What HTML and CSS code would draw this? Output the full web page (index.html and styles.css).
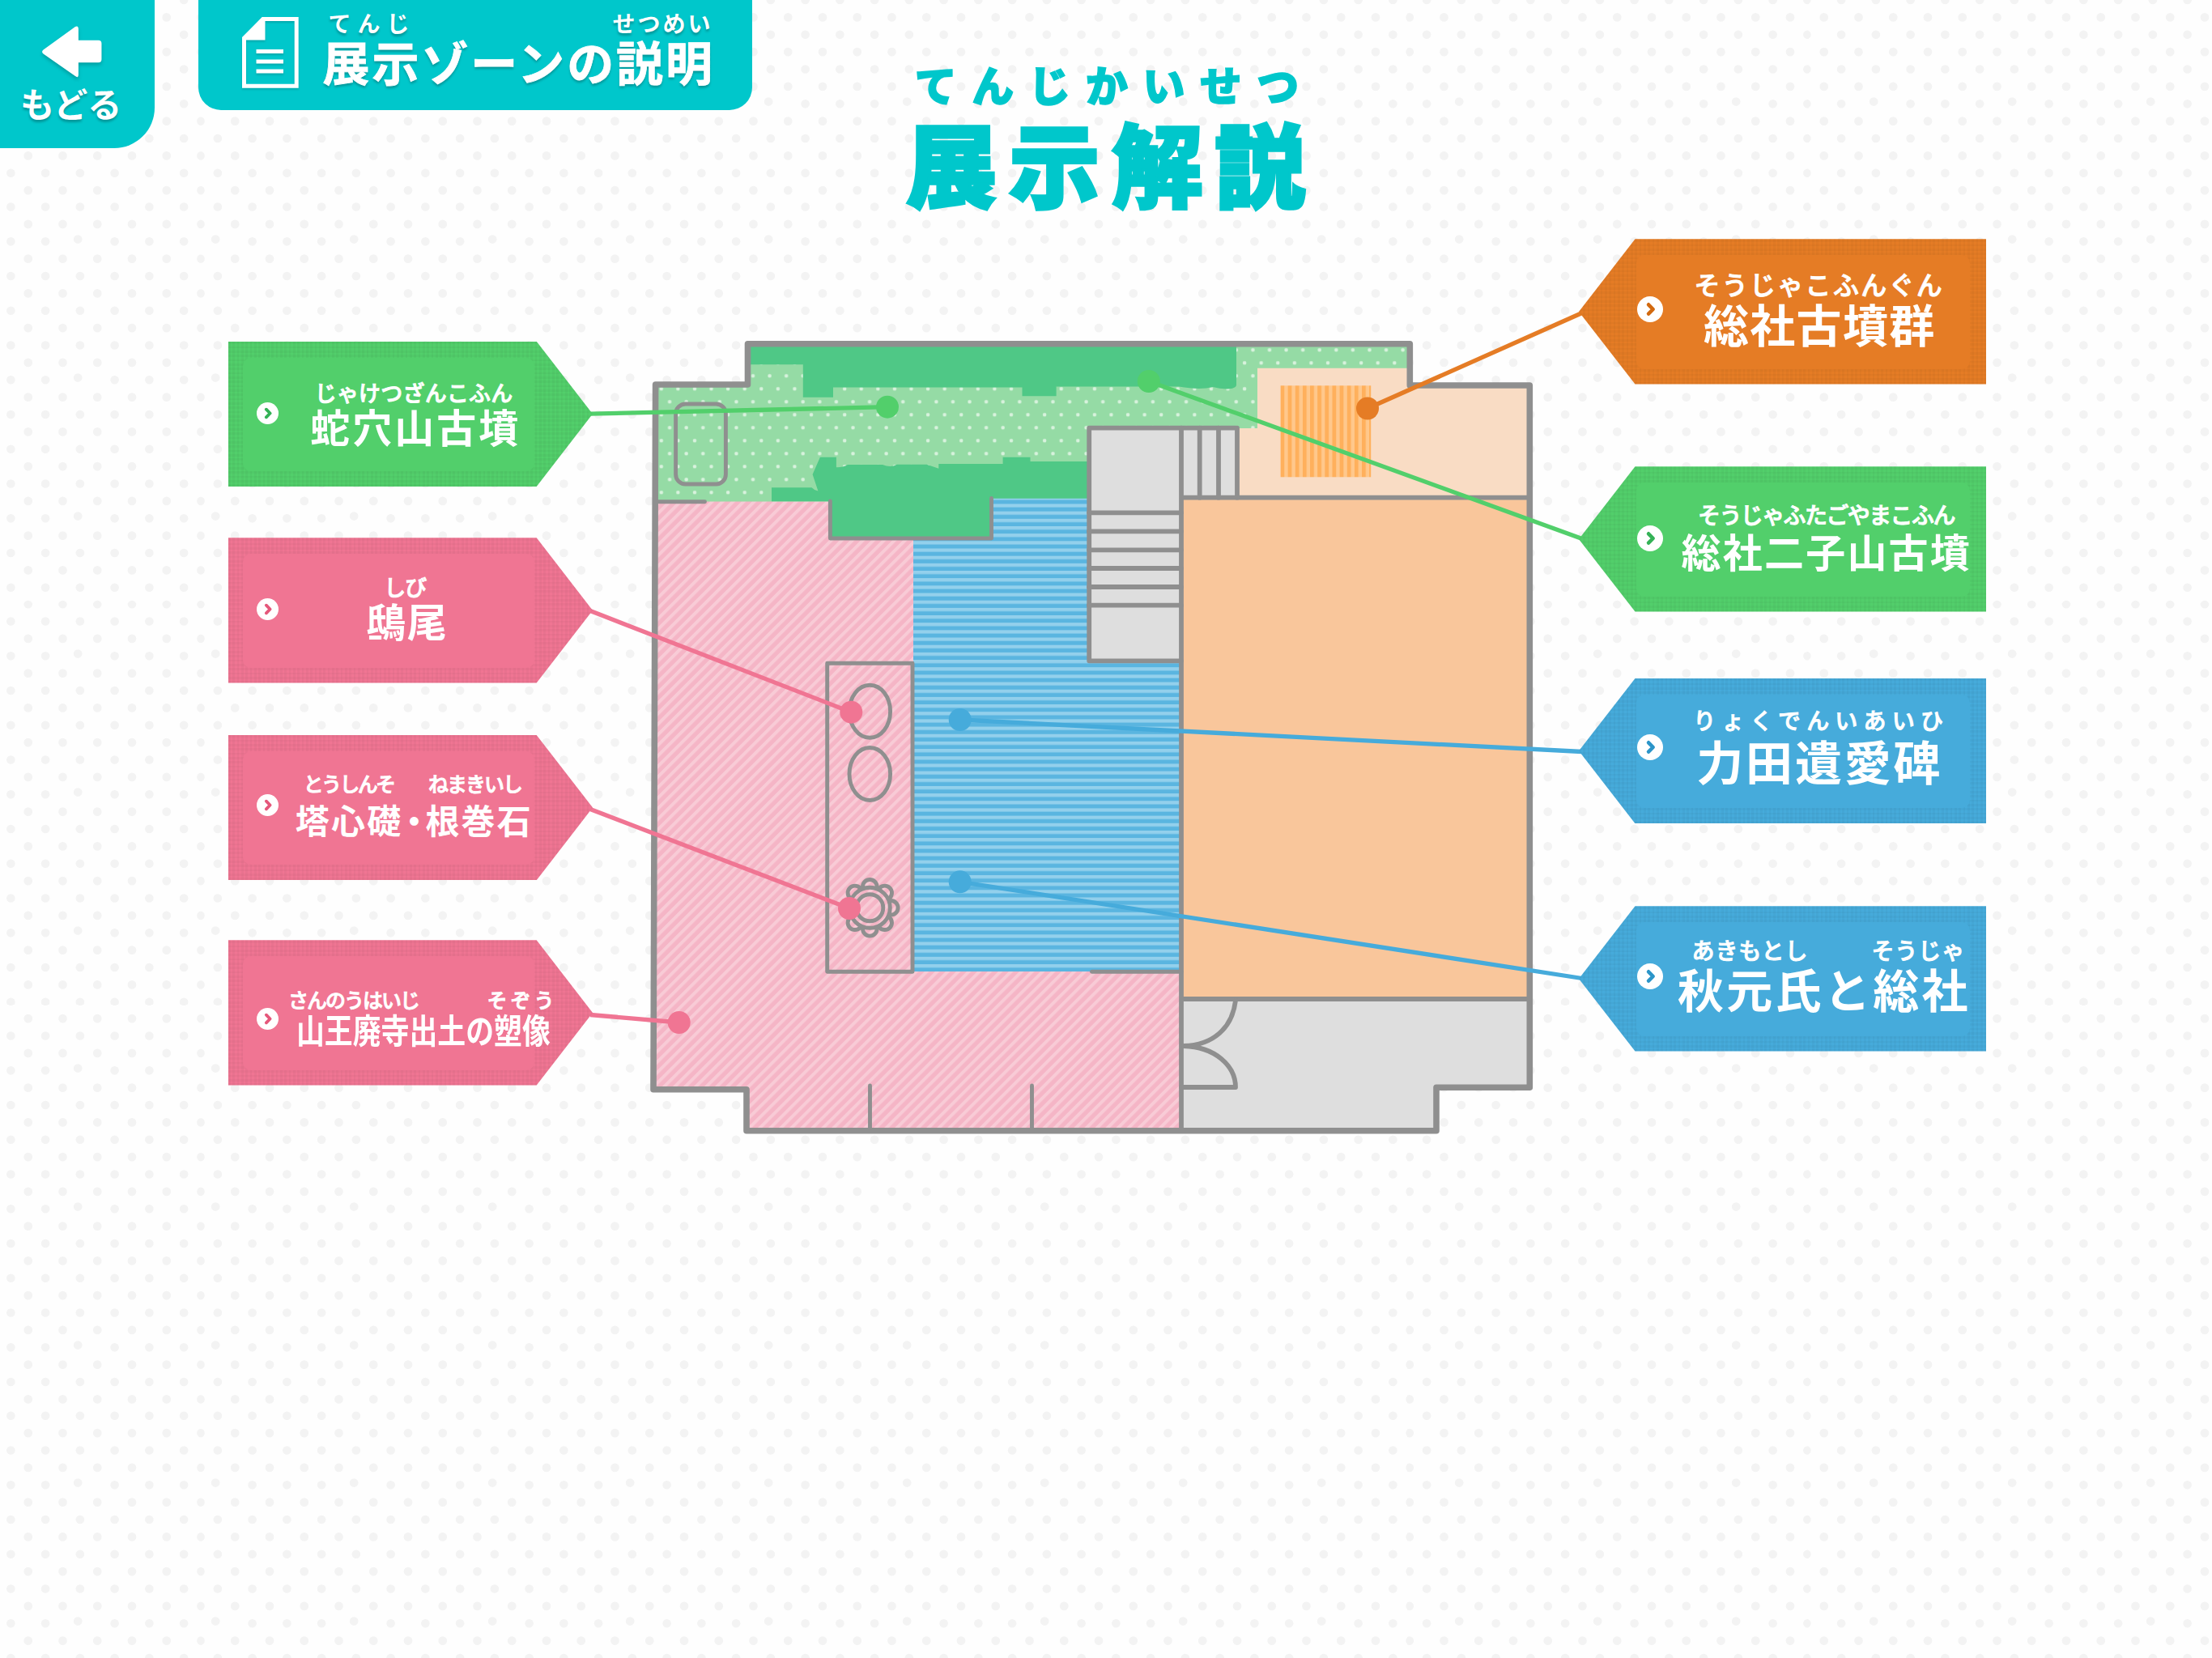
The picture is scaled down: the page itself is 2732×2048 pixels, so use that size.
FILE: index.html
```html
<!DOCTYPE html>
<html lang="ja">
<head>
    <meta charset="UTF-8">
    <meta name="viewport" content="width=device-width, initial-scale=1.0">
    <title>展示解説</title>
    <link rel="stylesheet" href="styles.css">
</head>
<body>
    <header class="header">
        <a class="back" href="#">
            <svg class="back-arrow" viewBox="0 0 76 68">
                <path d="M2 31 L42 2 Q46 0 46 5 V19 H71 Q75 19 75 23 V43 Q75 47 71 47 H46 V62 Q46 67 42 64 L2 36 Q-1 33.500 2 31 Z" fill="#fff"/>
            </svg>
            <span class="back-text">もどる</span>
        </a>
        <div class="panel">
            <svg class="panel-icon" viewBox="0 0 70 88">
                <path d="M26 2.500 H67.200 V85.200 H2.500 V27 Z" fill="none" stroke="#fff" stroke-width="5"/>
                <path d="M25 0 H28.500 V28.500 H0 V25 Z" fill="#fff"/>
                <path d="M17.500 42.500 H51 M17.500 55 H51 M17.500 67 H51" stroke="#fff" stroke-width="5"/>
            </svg>
            <div class="panel-label">
                <div class="panel-yomi"><span class="y1">てんじ</span><span class="y2">せつめい</span></div>
                <div class="panel-name">展示ゾーンの説明</div>
            </div>
        </div>
        <h1 class="title">
            <span class="title-yomi">てんじかいせつ</span>
            <span class="title-name">展示解説</span>
        </h1>
    </header>

    <svg class="symbols">
        <symbol id="chevron" viewBox="0 0 28 28">
            <circle cx="14" cy="14" r="14" fill="#fff"/>
            <path d="M12.300 9 L17.200 14 L12.300 19" fill="none" stroke="currentColor" stroke-width="4" stroke-linecap="round" stroke-linejoin="round"/>
        </symbol>
    </svg>

    <main class="guide">
        <nav class="tags tags-left">
            <a class="tag green jaketsuzan" href="#">
                <svg class="icon"><use href="#chevron"/></svg>
                <span class="label">
                    <span class="yomi">じゃけつざんこふん</span>
                    <span class="name">蛇穴山古墳</span>
                </span>
            </a>
            <a class="tag pink shibi" href="#">
                <svg class="icon"><use href="#chevron"/></svg>
                <span class="label">
                    <span class="yomi">しび</span>
                    <span class="name">鴟尾</span>
                </span>
            </a>
            <a class="tag pink toushinso" href="#">
                <svg class="icon"><use href="#chevron"/></svg>
                <span class="label">
                    <span class="yomi">とうしんそ<span class="next">ねまきいし</span></span>
                    <span class="name">塔心礎<span class="dot">・</span>根巻石</span>
                </span>
            </a>
            <a class="tag pink sannou" href="#">
                <svg class="icon"><use href="#chevron"/></svg>
                <span class="label">
                    <span class="yomi">さんのうはいじ<span class="next">そぞう</span></span>
                    <span class="name">山王廃寺出土の塑像</span>
                </span>
            </a>
        </nav>

        <svg class="map" viewBox="731 290 1219 1120">
            <defs>
                <pattern id="dots" x="816.800" y="480.300" width="20.580" height="32" patternUnits="userSpaceOnUse" patternTransform="translate(-5 -8)">
                    <rect width="21" height="32" fill="#95dba5"/>
                    <circle cx="5" cy="8" r="2.300" fill="#d8f2dd"/>
                    <circle cx="15.290" cy="24" r="2.300" fill="#d8f2dd"/>
                </pattern>
                <pattern id="pink" width="9.200" height="9.200" patternUnits="userSpaceOnUse" patternTransform="rotate(45)">
                    <rect width="9.200" height="9.200" fill="#f5b5c6"/>
                    <rect width="4" height="9.200" fill="#f8cbd6"/>
                </pattern>
                <pattern id="blue" y="1191" width="20" height="9.170" patternUnits="userSpaceOnUse">
                    <rect width="20" height="9.170" fill="#5ab5e0"/>
                    <rect width="20" height="4.200" fill="#93d0ec"/>
                </pattern>
                <pattern id="orange" x="1581.500" width="9.140" height="20" patternUnits="userSpaceOnUse">
                    <rect width="9.140" height="20" fill="#ffc88c"/>
                    <rect width="4.800" height="20" fill="#ffb05c"/>
                </pattern>
            </defs>

            <!-- floor areas -->
            <path d="M809 619 H1459 V1397 H922 V1346 H807 Z" fill="url(#pink)"/>
            <path d="M1128 615 H1459 V1200 H1128 Z" fill="url(#blue)"/>
            <path d="M809 475 H923.500 V425 H1741 V530 H1459 V615 H1225 V619.500 H809 Z" fill="url(#dots)"/>
            <path d="M1553 454.700 H1741 V476 H1889 V615 H1459 V529 H1553 Z" fill="#f9dcc4"/>
            <rect x="1581.500" y="476.300" width="111.700" height="113" fill="url(#orange)"/>
            <rect x="1459" y="615" width="430" height="620" fill="#f9c69b"/>
            <path d="M1459 1234 H1889 V1343.300 H1774 V1396.700 H1459 Z" fill="#dedede"/>

            <!-- mounds -->
            <path d="M927 425 H1527 V476 Q1526 480 1515 480.500 Q1506 480 1498 478 Q1482 482 1456 477.500 H1304.600 V489.300 H1262.500 V478.500 H1029 V490.700 H991.800 V450.300 H927 Z" fill="#4fc886"/>
            <path d="M953 602.300 H1002.500 Q1006 606 1010.400 606.500 L1003.600 586 L1012.900 564.700 H1032.900 V577.300 Q1041 577.500 1047 574 H1090 Q1100 578 1108 573.700 H1144.600 L1159.300 578.700 V573 H1238.600 V564.700 H1272.500 V570 H1345 V615.700 H1225 V665 H1025 V619.300 H953 Z" fill="#4fc886"/>

            <!-- stairs -->
            <path d="M1345.200 528.700 H1528 V615 H1459 V816.300 H1345.200 Z" fill="#dedede"/>
            <g class="wall wall-mid">
                <path d="M1459 816.300 H1345.200 V528.700 H1528 V614.700"/>
                <path d="M1481.700 528.700 V614.700 M1505 528.700 V614.700"/>
                <path d="M1345 633.300 H1459 M1345 656.300 H1459 M1345 679.300 H1459 M1345 702 H1459 M1345 725 H1459 M1345 747.700 H1459"/>
                <path d="M1459 614.700 H1889 M1459 1234 H1889 M1459 528.700 V1396"/>
                <path d="M1526 1236 C1522 1270 1498 1291 1462 1292 C1500 1293 1526 1316 1526 1343 H1459"/>
            </g>

            <!-- inner walls and exhibits -->
            <g class="wall wall-thin">
                <path d="M809 619.700 H870.500"/>
                <path d="M1025.400 619 V665 H1224.500 V615.500"/>
                <path d="M1348.500 1200.300 H1459"/>
                <path d="M1074.500 1341 V1396 M1274.500 1341 V1396"/>
                <rect x="834.600" y="499" width="61.800" height="99" rx="12"/>
                <rect x="1021.700" y="819.300" width="105.300" height="381"/>
                <ellipse cx="1074.300" cy="878.700" rx="25.300" ry="32.500"/>
                <ellipse cx="1074.300" cy="956" rx="25.300" ry="32.500"/>
                <circle cx="1074.300" cy="1095.300" r="8.800"/>
                <circle cx="1092.700" cy="1102.900" r="8.800"/>
                <circle cx="1100.300" cy="1121.300" r="8.800"/>
                <circle cx="1092.700" cy="1139.700" r="8.800"/>
                <circle cx="1074.300" cy="1147.300" r="8.800"/>
                <circle cx="1055.900" cy="1139.700" r="8.800"/>
                <circle cx="1048.300" cy="1121.300" r="8.800"/>
                <circle cx="1055.900" cy="1102.900" r="8.800"/>
                <circle cx="1074.300" cy="1121.300" r="25" fill="url(#pink)"/>
                <circle cx="1074.300" cy="1121.300" r="16.500"/>
            </g>

            <!-- outer wall -->
            <path class="wall wall-outer" d="M809.600 475 H923.500 V424.700 H1741.300 V476 H1889.300 V1343.300 H1774 V1396.700 H922 V1345.700 H807 Z"/>

            <!-- leader lines -->
            <g class="lead lead-green">
                <path d="M729 511.200 L1096 502.700"/><circle cx="1096" cy="502.700" r="14"/>
                <path d="M1954 665.500 L1418.800 471"/><circle cx="1418.800" cy="471" r="14"/>
            </g>
            <g class="lead lead-pink">
                <path d="M729 754.500 L1051.300 879.700"/><circle cx="1051.300" cy="879.700" r="14"/>
                <path d="M729 999.500 L1049 1122"/><circle cx="1049" cy="1122" r="14"/>
                <path d="M729 1253.500 L838.700 1263"/><circle cx="838.700" cy="1263" r="14"/>
            </g>
            <g class="lead lead-orange">
                <path d="M1954 386.500 L1689 504.500"/><circle cx="1689" cy="504.500" r="14"/>
            </g>
            <g class="lead lead-blue">
                <path d="M1954 928.500 L1185.700 889"/><circle cx="1185.700" cy="889" r="14"/>
                <path d="M1954 1208.500 L1185.700 1089.300"/><circle cx="1185.700" cy="1089.300" r="14"/>
            </g>
        </svg>

        <nav class="tags tags-right">
            <a class="tag orange kofungun" href="#">
                <svg class="icon"><use href="#chevron"/></svg>
                <span class="label">
                    <span class="yomi">そうじゃこふんぐん</span>
                    <span class="name">総社古墳群</span>
                </span>
            </a>
            <a class="tag green futagoyama" href="#">
                <svg class="icon"><use href="#chevron"/></svg>
                <span class="label">
                    <span class="yomi">そうじゃふたごやまこふん</span>
                    <span class="name">総社二子山古墳</span>
                </span>
            </a>
            <a class="tag blue ryokuden" href="#">
                <svg class="icon"><use href="#chevron"/></svg>
                <span class="label">
                    <span class="yomi">りょくでんいあいひ</span>
                    <span class="name">力田遺愛碑</span>
                </span>
            </a>
            <a class="tag blue akimoto" href="#">
                <svg class="icon"><use href="#chevron"/></svg>
                <span class="label">
                    <span class="yomi">あきもとし<span class="next">そうじゃ</span></span>
                    <span class="name">秋元氏と総社</span>
                </span>
            </a>
        </nav>
    </main>
</body>
</html>
```

FILE: styles.css
```css
* {
    box-sizing: border-box;
}

body {
    margin: 0;
    min-height: 2048px;
    font-family: "Noto Sans CJK JP", sans-serif;
    font-weight: 700;
    background-color: #fefefe;
    background-image: url("data:image/svg+xml,%3Csvg xmlns='http://www.w3.org/2000/svg' viewBox='0 0 64 64' width='64' height='64'%3E%3Cg fill='none' stroke='%23f3f3f3' stroke-width='4' stroke-linecap='round'%3E%3Cpath d='M5 0h0M21 0h0M37 0h0M53 0h0M13 8h0M29 8h0M45 8h0M61 8h0M5 16h0M21 16h0M37 16h0M53 16h0M13 24h0M29 24h0M45 24h0M61 24h0M5 32h0M21 32h0M37 32h0M53 32h0M13 40h0M29 40h0M45 40h0M61 40h0M5 48h0M21 48h0M36 47h0M53 48h0M13 56h0M29 56h0M45 56h0M61 56h0M5 64h0M21 64h0M37 64h0M53 64h0'/%3E%3C/g%3E%3C/svg%3E");
    background-size: 170.667px 170.667px;
}

a {
    color: inherit;
    text-decoration: none;
}

.symbols {
    display: none;
}

/* header */
.header {
    display: flex;
    align-items: flex-start;
    height: 290px;
    line-height: 1;
    white-space: nowrap;
}

.back {
    width: 190.600px;
    height: 182.500px;
    padding: 31px 0 0 25px;
    color: #fff;
    background: #00c7cb;
    border-radius: 0 0 50px 0;
}

.back-arrow {
    display: block;
    width: 76px;
    height: 67px;
    margin-left: 26px;
    filter: drop-shadow(0 3px 2px rgba(0, 0, 0, .2));
}

.back-text {
    display: block;
    margin-top: 8px;
    font-size: 42px;
    text-shadow: 0 3px 3px rgba(0, 0, 0, .25);
}

.panel {
    display: flex;
    width: 683.700px;
    height: 136px;
    margin-left: 54.500px;
    padding-left: 53.500px;
    color: #fff;
    background: #00c7cb;
    border-radius: 0 0 28px 28px;
}

.panel-icon {
    width: 70px;
    height: 88px;
    margin-top: 21px;
    filter: drop-shadow(0 2px 1px rgba(0, 0, 0, .15));
}

.panel-label {
    margin-left: 30px;
    text-shadow: 0 3px 3px rgba(0, 0, 0, .25);
}

.panel-yomi {
    margin-top: 13.500px;
    padding-left: 7px;
    font-size: 28px;
}

.panel-yomi .y1 {
    letter-spacing: 8px;
}

.panel-yomi .y2 {
    margin-left: 243px;
    letter-spacing: 3px;
}

.panel-name {
    margin-top: 4px;
    font-size: 58px;
    letter-spacing: 2.900px;
    -webkit-text-stroke: .8px #fff;
}

.title {
    margin: 78px 0 0 189px;
    color: #00c7cb;
    font-weight: 900;
}

.title span {
    display: block;
}

.title-yomi {
    padding-left: 12px;
    font-size: 52px;
    letter-spacing: 18.400px;
    -webkit-text-stroke: 1.500px #00c7cb;
}

.title-name {
    margin-top: 13px;
    padding-left: 1.500px;
    font-size: 112px;
    letter-spacing: 15px;
    -webkit-text-stroke: 3.500px #00c7cb;
}

/* guide: tags on both sides of the floor map */
.guide {
    display: flex;
    padding-left: 281.700px;
}

.tags {
    display: flex;
    flex-direction: column;
    flex-shrink: 0;
}

.tags-left {
    width: 450.300px;
    padding-top: 131.700px;
}

.tags-right {
    width: 503px;
    padding-top: 5.300px;
}

.map {
    display: block;
    flex-shrink: 0;
    width: 1219px;
    height: 1120px;
    margin-left: -1px;
    overflow: visible;
}

.wall {
    fill: none;
    stroke: #8f8f8f;
    stroke-linejoin: round;
    stroke-linecap: round;
}

.wall-outer { stroke-width: 7.600px; }
.wall-mid { stroke-width: 5.800px; }
.wall-thin { stroke-width: 4.900px; }

.lead { stroke-width: 5.300px; }
.lead circle { stroke: none; }
.lead-green { stroke: #52cf6b; fill: #52cf6b; }
.lead-pink { stroke: #f07593; fill: #f07593; }
.lead-orange { stroke: #e57c25; fill: #e57c25; }
.lead-blue { stroke: #46abdb; fill: #46abdb; }

.tag {
    position: relative;
    isolation: isolate;
    display: flex;
    height: 179.300px;
    color: #fff;
    line-height: 1;
    white-space: nowrap;
    background-color: var(--tag);
    background-image:
        repeating-linear-gradient(90deg, rgba(0, 0, 0, .027) 0 2.667px, transparent 2.667px 5.333px),
        repeating-linear-gradient(0deg, rgba(0, 0, 0, .027) 0 2.667px, transparent 2.667px 5.333px);
}

.tag::before {
    content: "";
    position: absolute;
    z-index: -1;
    top: 20px;
    bottom: 19px;
    background: var(--tag);
    border-radius: 10px;
}

.green { --tag: #52cf6b; --mark: #35b257; }
.pink { --tag: #f07593; --mark: #e5587b; }
.orange { --tag: #e57c25; --mark: #d2690f; }
.blue { --tag: #46abdb; --mark: #2c95c9; }

.tags-left .tag { clip-path: polygon(0 0, 381px 0, 100% 50%, 381px 100%, 0 100%); }
.tags-left .tag::before { left: 18px; right: 72px; }
.tags-right .tag { clip-path: polygon(0 50%, 69.500px 0, 100% 0, 100% 100%, 69.500px 100%); }
.tags-right .tag::before { left: 71px; right: 20px; }

.icon {
    flex-shrink: 0;
    color: var(--mark);
}

.tags-left .icon {
    width: 27px;
    height: 27px;
    margin: 75.500px 0 0 35.500px;
}

.tags-right .icon {
    width: 32px;
    height: 32px;
    margin: 71px 0 0 72px;
}

.yomi,
.name {
    display: block;
}

.yomi {
    font-weight: 500;
    -webkit-text-stroke: .9px #fff;
}

/* left column */
.jaketsuzan .label { padding-top: 49px; }
.jaketsuzan .yomi { padding-left: 44.500px; font-size: 27px; letter-spacing: .2px; }
.jaketsuzan .name { margin-top: 3.400px; padding-left: 39px; font-size: 49px; letter-spacing: 3px; }

.shibi { margin-top: 63.300px; }
.tags-left .shibi .icon { margin-top: 74.300px; }
.shibi .label { padding-top: 46.400px; }
.shibi .yomi { padding-left: 130px; font-size: 27px; letter-spacing: -1px; }
.shibi .name { margin-top: 3px; padding-left: 108px; font-size: 49px; letter-spacing: 1.500px; }

.toushinso { margin-top: 64.400px; }
.tags-left .toushinso .icon { margin-top: 73.500px; }
.toushinso .label { padding-top: 46.800px; }
.toushinso .yomi { padding-left: 30.600px; font-size: 25px; letter-spacing: -2.700px; }
.toushinso .next { margin-left: 42.700px; letter-spacing: -2px; }
.toushinso .name { margin-top: 11px; padding-left: 20.600px; font-size: 42px; letter-spacing: 2.200px; }
.toushinso .dot { margin-left: -7px; letter-spacing: -7px; }

.sannou { margin-top: 74px; }
.tags-left .sannou .icon { margin-top: 84.200px; }
.sannou .label { padding-top: 60.800px; }
.sannou .yomi { padding-left: 11.800px; font-size: 25px; letter-spacing: -2px; }
.sannou .next { margin-left: 84.500px; letter-spacing: 4px; }
.sannou .name { margin: 4px 0 0 21.500px; font-size: 41.500px; transform: scaleX(.84); transform-origin: left; }

/* right column */
.kofungun .label { padding-top: 39.200px; }
.kofungun .yomi { padding-left: 38.400px; font-size: 32px; letter-spacing: 2.300px; }
.kofungun .name { margin-top: 4.400px; padding-left: 50px; font-size: 56px; letter-spacing: 1.300px; }

.futagoyama { margin-top: 101.700px; }
.tags-right .futagoyama .icon { margin-top: 73px; }
.futagoyama .label { padding-top: 44.800px; }
.futagoyama .yomi { padding-left: 43px; font-size: 28px; letter-spacing: -1.600px; }
.futagoyama .name { margin-top: 6px; padding-left: 22.600px; font-size: 49px; letter-spacing: 2.200px; }

.ryokuden { margin-top: 82.400px; }
.tags-right .ryokuden .icon { margin-top: 69.300px; }
.ryokuden .label { padding-top: 36.700px; }
.ryokuden .yomi { padding-left: 37.200px; font-size: 28px; letter-spacing: 7.200px; }
.ryokuden .name { margin-top: 7.400px; padding-left: 41.300px; font-size: 58px; letter-spacing: 2.800px; }

.akimoto { margin-top: 102px; }
.akimoto .label { padding-top: 40px; }
.akimoto .yomi { padding-left: 35.500px; font-size: 28px; letter-spacing: .9px; }
.akimoto .next { margin-left: 78px; }
.akimoto .name { margin-top: 5px; padding-left: 18px; font-size: 57px; letter-spacing: 3.300px; }
```
